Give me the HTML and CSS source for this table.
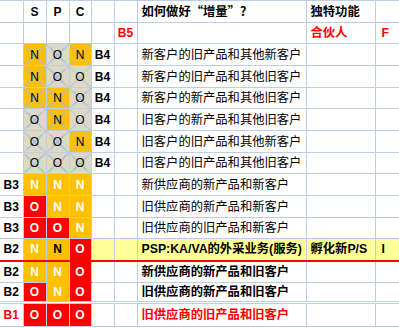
FILE: index.html
```html
<!DOCTYPE html>
<html>
<head>
<meta charset="utf-8">
<link rel="stylesheet" href="styles.css">
</head>
<body>
<table class="sheet">
  <colgroup>
    <col class="w23"><col class="w23"><col class="w23"><col class="w22"><col class="w23"><col class="w23"><col class="w169"><col class="w69"><col class="w24">
  </colgroup>
  <tr class="r22">
    <td></td><td class="c b">S</td><td class="c b">P</td><td class="c b">C</td><td></td><td></td>
    <td class="t b">如何做好<span class="cjk">“</span>增量<span class="cjk">”</span>？</td><td class="t b">独特功能</td><td></td>
  </tr>
  <tr class="r21">
    <td></td><td></td><td></td><td></td><td></td><td class="c b red-t">B5</td>
    <td></td><td class="t b red-t">合伙人</td><td class="t b red-t fx">F</td>
  </tr>
  <tr class="r22">
    <td></td><td class="c x or">N</td><td class="c x bg">O</td><td class="c x or">N</td><td class="c b">B4</td><td></td>
    <td class="t">新客户的旧产品和其他新客户</td><td></td><td></td>
  </tr>
  <tr class="r22">
    <td></td><td class="c x or">N</td><td class="c x bg">O</td><td class="c x bg">O</td><td class="c b">B4</td><td></td>
    <td class="t">新客户的旧产品和其他旧客户</td><td></td><td></td>
  </tr>
  <tr class="r21">
    <td></td><td class="c x or">N</td><td class="c x or">N</td><td class="c x bg">O</td><td class="c b">B4</td><td></td>
    <td class="t">新客户的新产品和其他旧客户</td><td></td><td></td>
  </tr>
  <tr class="r22">
    <td></td><td class="c x bg">O</td><td class="c x or">N</td><td class="c x bg">O</td><td class="c b">B4</td><td></td>
    <td class="t">旧客户的新产品和其他旧客户</td><td></td><td></td>
  </tr>
  <tr class="r22">
    <td></td><td class="c x bg">O</td><td class="c x bg">O</td><td class="c x or">N</td><td class="c b">B4</td><td></td>
    <td class="t">旧客户的旧产品和其他新客户</td><td></td><td></td>
  </tr>
  <tr class="r21">
    <td></td><td class="c x bg">O</td><td class="c x bg">O</td><td class="c x bg">O</td><td class="c b">B4</td><td></td>
    <td class="t">旧客户的旧产品和其他旧客户</td><td></td><td></td>
  </tr>
  <tr class="r22">
    <td class="c b">B3</td><td class="c b or w">N</td><td class="c b or w">N</td><td class="c b or w">N</td><td></td><td></td>
    <td class="t">新供应商的新产品和新客户</td><td></td><td></td>
  </tr>
  <tr class="r22">
    <td class="c b">B3</td><td class="c b rd w">O</td><td class="c b or w">N</td><td class="c b or w">N</td><td></td><td></td>
    <td class="t">旧供应商的新产品和新客户</td><td></td><td></td>
  </tr>
  <tr class="r21">
    <td class="c b">B3</td><td class="c b rd w">O</td><td class="c b rd w">O</td><td class="c b or w">N</td><td></td><td></td>
    <td class="t">旧供应商的旧产品和新客户</td><td></td><td></td>
  </tr>
  <tr class="r22 hl">
    <td class="c b">B2</td><td class="c b or w">N</td><td class="c b or">N</td><td class="c b rd w rd-join">O</td><td class="yl"></td><td class="yl"></td>
    <td class="t b yl">PSP:KA/VA的外采业务(服务)</td><td class="t b yl">孵化新P/S</td><td class="t b yl fx">I</td>
  </tr>
  <tr class="r22">
    <td class="c b">B2</td><td class="c b or w">N</td><td class="c b or w or-join">N</td><td class="c b rd w rd-join">O</td><td></td><td></td>
    <td class="t b">新供应商的新产品和旧客户</td><td></td><td></td>
  </tr>
  <tr class="r20">
    <td class="c b">B2</td><td class="c b rd w">O</td><td class="c b or w">N</td><td class="c b rd w">O</td><td></td><td></td>
    <td class="t b">旧供应商的新产品和旧客户</td><td></td><td></td>
  </tr>
  <tr class="r24 last">
    <td class="c b red-t">B1</td><td class="c b rd w">O</td><td class="c b rd w">O</td><td class="c b rd w">O</td><td></td><td></td>
    <td class="t b red-t">旧供应商的旧产品和旧客户</td><td></td><td></td>
  </tr>
</table>
</body>
</html>
```

FILE: styles.css
```css
html, body {
  margin: 0;
  padding: 0;
  background: #ffffff;
}

.sheet {
  border-collapse: collapse;
  table-layout: fixed;
  width: 399px;
  font-family: "Liberation Sans", Arial, "Noto Sans CJK SC", sans-serif;
  font-size: 12px;
  color: #000;
}

.w23 { width: 23px; }
.w22 { width: 22px; }
.w24 { width: 24px; }
.w69 { width: 69px; }
.w169 { width: 169px; }

.sheet td {
  border: 1px solid #bdcde6;
  padding: 0;
  white-space: nowrap;
  overflow: hidden;
  vertical-align: middle;
  line-height: 14px;
}

.sheet tr td:first-child { border-left: none; }

.r20 { height: 20px; }
.r21 { height: 21px; }
.r22 { height: 22px; }
.r24 { height: 24px; }

.c { text-align: center; }
.b { font-weight: bold; }
.t {
  text-align: left;
  padding-left: 4px !important;
  font-family: "Liberation Sans", Arial, "Noto Sans CJK SC", sans-serif;
  font-size: 12.3px;
}
.cjk { font-family: "Noto Sans CJK SC", sans-serif; }
.fx { padding-left: 6px !important; }

.red-t { color: #ff0000; }
.w { color: #ffffff; }

.or { background-color: #ffc000; }
.rd { background-color: #ff0000; }
.bg { background-color: #ddd9c4; }
.yl { background-color: #ffff99; }

.x {
  background-image:
    linear-gradient(to top right, transparent calc(50% - 0.6px), #a3badb calc(50% - 0.6px), #a3badb calc(50% + 0.6px), transparent calc(50% + 0.6px)),
    linear-gradient(to bottom right, transparent calc(50% - 0.6px), #a3badb calc(50% - 0.6px), #a3badb calc(50% + 0.6px), transparent calc(50% + 0.6px));
}

.hl td { border-bottom: 2px solid #ff0000; }

.rd-join { border-bottom-color: #ff0000 !important; }
.or-join { border-bottom-color: #ffc000 !important; }

.last td { border-top: 3px double #bdcde6; }
```
